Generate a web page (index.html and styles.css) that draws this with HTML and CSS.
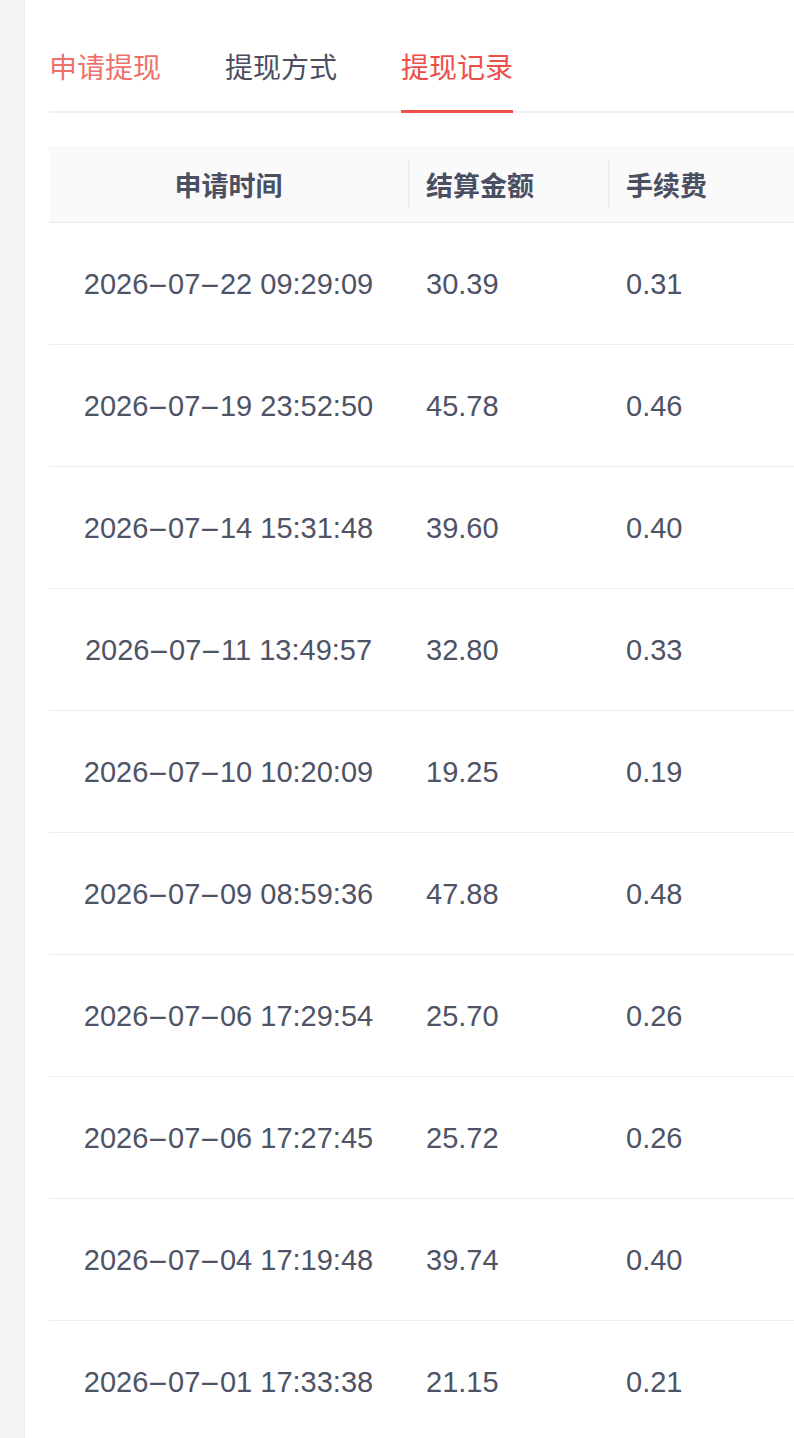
FILE: index.html
```html
<!DOCTYPE html>
<html lang="zh-CN">
<head>
    <meta charset="UTF-8">
    <meta name="viewport" content="width=device-width, initial-scale=1.0">
    <title>提现记录</title>
    <link rel="stylesheet" href="styles.css">
</head>
<body>
    <div class="panel">
        <div class="tabs">
            <div class="tab tab-hover">申请提现</div>
            <div class="tab">提现方式</div>
            <div class="tab active">提现记录</div>
        </div>

        <table class="records">
            <colgroup>
                <col class="col-time">
                <col class="col-amount">
                <col class="col-fee">
            </colgroup>
            <thead>
                <tr>
                    <th class="center">申请时间</th>
                    <th>结算金额</th>
                    <th>手续费</th>
                </tr>
            </thead>
            <tbody>
                <tr><td class="center">2026<span class="sep">-</span>07<span class="sep">-</span>22 09:29:09</td><td>30.39</td><td>0.31</td></tr>
                <tr><td class="center">2026<span class="sep">-</span>07<span class="sep">-</span>19 23:52:50</td><td>45.78</td><td>0.46</td></tr>
                <tr><td class="center">2026<span class="sep">-</span>07<span class="sep">-</span>14 15:31:48</td><td>39.60</td><td>0.40</td></tr>
                <tr><td class="center">2026<span class="sep">-</span>07<span class="sep">-</span>11 13:49:57</td><td>32.80</td><td>0.33</td></tr>
                <tr><td class="center">2026<span class="sep">-</span>07<span class="sep">-</span>10 10:20:09</td><td>19.25</td><td>0.19</td></tr>
                <tr><td class="center">2026<span class="sep">-</span>07<span class="sep">-</span>09 08:59:36</td><td>47.88</td><td>0.48</td></tr>
                <tr><td class="center">2026<span class="sep">-</span>07<span class="sep">-</span>06 17:29:54</td><td>25.70</td><td>0.26</td></tr>
                <tr><td class="center">2026<span class="sep">-</span>07<span class="sep">-</span>06 17:27:45</td><td>25.72</td><td>0.26</td></tr>
                <tr><td class="center">2026<span class="sep">-</span>07<span class="sep">-</span>04 17:19:48</td><td>39.74</td><td>0.40</td></tr>
                <tr><td class="center">2026<span class="sep">-</span>07<span class="sep">-</span>01 17:33:38</td><td>21.15</td><td>0.21</td></tr>
            </tbody>
        </table>
    </div>
</body>
</html>
```

FILE: styles.css
```css
html, body {
    margin: 0;
    padding: 0;
    overflow: hidden;
}
body {
    font-family: "Liberation Sans", "Noto Sans CJK SC", sans-serif;
    background-color: #f5f5f5;
    padding-left: 24px;
    color: #4d5264;
}
.panel {
    background: white;
    border-left: 1px solid #ececec;
    padding-left: 24px;
    min-height: 1438px;
}
.tabs {
    display: flex;
    align-items: flex-end;
    height: 113px;
    border-bottom: 2px solid #efefef;
    box-sizing: border-box;
}
.tab {
    font-size: 28px;
    line-height: 40px;
    padding: 0 0 21px;
    margin-right: 64px;
    margin-bottom: -2px;
    border-bottom: 3px solid transparent;
    color: #4b4f5f;
}
.tab-hover {
    color: #ee716c;
}
.tab.active {
    color: #ef4e4b;
    border-bottom-color: #ef4e4b;
}
.records {
    margin-top: 33px;
    border-collapse: collapse;
    width: 100%;
    table-layout: fixed;
}
.col-time { width: 359px; }
.col-amount { width: 200px; }
.records th {
    position: relative;
    height: 76px;
    background: #fafafa;
    border-bottom: 1px solid #ededed;
    font-size: 27px;
    font-weight: bold;
    color: #4a4f62;
    text-align: left;
    padding: 0 18px;
}
.records th + th::before {
    content: "";
    position: absolute;
    left: 0;
    top: 14px;
    bottom: 14px;
    width: 2px;
    background: #efefef;
}
.records td {
    height: 119px;
    border-bottom: 1px solid #ededed;
    font-size: 29px;
    padding: 2px 18px 0;
    text-align: left;
    color: #4e5365;
    white-space: nowrap;
}
.records .center {
    text-align: center;
    padding-left: 0;
    padding-right: 0;
}
.sep {
    display: inline-block;
    padding: 0 5px;
    transform: scaleX(2.2);
}
```
